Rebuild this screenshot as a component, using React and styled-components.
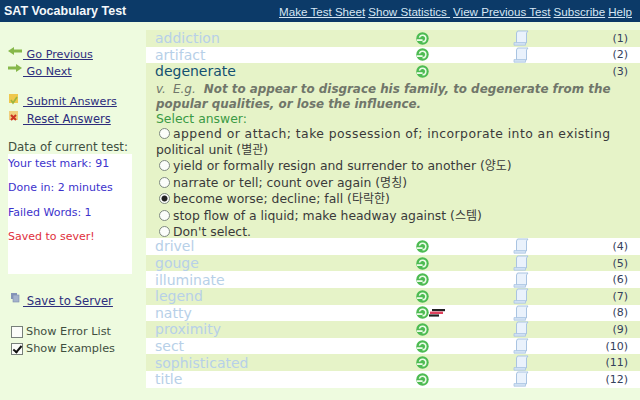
import React from "react";
import styled, { createGlobalStyle } from "styled-components";

const GlobalStyle = createGlobalStyle`
  html, body {
    margin: 0;
    padding: 0;
    background: #eefbdf;
  }
  body {
    font-family: "DejaVu Sans", Verdana, sans-serif;
    width: 640px;
    height: 400px;
    overflow: hidden;
  }
`;

const Header = styled.div`
  height: 22px;
  background: #0c3a68;
  display: flex;
  align-items: center;
  justify-content: space-between;
  padding: 0 8px 0 4px;
`;

const Title = styled.div`
  color: #f4f8fb;
  font: bold 12.5px "Liberation Sans", Arial, sans-serif;
`;

const TopNav = styled.div`
  display: flex;
  gap: 3px;
`;

const TopLink = styled.a`
  color: #d6e6f4;
  font: 11.6px "Liberation Sans", Arial, sans-serif;
  text-decoration: underline;
  white-space: pre;
`;

const Body = styled.div`
  display: flex;
`;

const Sidebar = styled.div`
  width: 146px;
  flex: none;
  padding: 24px 0 0 8px;
  box-sizing: border-box;
  font-size: 11px;
  color: #3f4f3f;
`;

const NavItem = styled.a`
  display: flex;
  align-items: flex-start;
  height: 17px;
  line-height: 18px;
  color: #2d2d7c;
  font-size: ${(p) => p.$size || 11.2}px;
  text-decoration: underline;
  white-space: pre;
  margin-top: ${(p) => p.$top || 0}px;
`;

const NavIcon = styled.svg`
  width: 15px;
  height: 12px;
  flex: none;
  margin-top: 1px;
`;

const DataLabel = styled.div`
  margin-top: 12px;
  height: 15px;
  line-height: 16px;
  font-size: 11.8px;
`;

const ResultBox = styled.div`
  width: 124px;
  height: 120px;
  background: #fff;
  box-sizing: border-box;
`;

const ResultLine = styled.div`
  height: 24.3px;
  line-height: 20px;
  color: ${(p) => p.$color};
`;

const CheckRow = styled.div`
  display: flex;
  align-items: center;
  height: 17px;
  padding-left: 3px;
  font-size: 11.3px;
  margin-top: ${(p) => p.$top || 0}px;
`;

const CheckBox = styled.input`
  appearance: none;
  width: 12px;
  height: 12px;
  margin: 0 3px 0 0;
  border: 1px solid #77807a;
  background: #fbfdf9;
  position: relative;
  &:checked::after {
    content: "";
    position: absolute;
    left: 3px;
    top: 0;
    width: 3px;
    height: 7px;
    border: solid #111;
    border-width: 0 2px 2px 0;
    transform: rotate(40deg);
  }
`;

const Main = styled.div`
  flex: 1;
  padding-top: 8px;
`;

const Row = styled.div`
  display: grid;
  grid-template-columns: 270px 97px 1fr 20px;
  align-items: center;
  height: 16.6px;
  background: ${(p) => (p.$odd ? "#e6f3c8" : "#fff")};
`;

const Word = styled.span`
  font-size: 14px;
  line-height: 16px;
  padding-left: 9px;
  color: ${(p) => (p.$active ? "#135070" : "#b7d0e8")};
`;

const IconCell = styled.span`
  display: flex;
  align-items: center;
`;

const Num = styled.span`
  font-size: 11px;
  color: #34405c;
  text-align: right;
  justify-self: end;
  white-space: nowrap;
  padding-right: 12px;
  grid-column: 4;
`;

const Expanded = styled.div`
  background: #e6f3c8;
  height: 175px;
`;

const Details = styled.div`
  padding: 0 20px 0 10px;
  color: #2c2c2c;
  font-size: 12.4px;
  line-height: 15px;
`;

const Example = styled.div`
  color: #70766a;
  font-style: italic;
  font-size: 12px;
  line-height: 15px;
  padding-top: 2px;
  & b {
    font-size: 11.9px;
    margin-left: 8px;
  }
`;

const ExampleKind = styled.span`
  margin-right: 7px;
`;

const SelectLabel = styled.div`
  color: #3a9a44;
  line-height: 14.5px;
`;

const Option = styled.label`
  display: block;
  line-height: 15.5px;
  margin-bottom: 1px;
  color: #3a3a3a;
`;

const Spread = styled.span`
  letter-spacing: 0.44px;
`;

const Radio = styled.input`
  appearance: none;
  width: 11px;
  height: 11px;
  margin: 0 3px 0 3px;
  vertical-align: -1px;
  border: 1px solid #7f8a80;
  border-radius: 50%;
  background: #fbfdfa;
  &:checked {
    background: radial-gradient(circle, #222 0 2.6px, #fbfdfa 3.4px);
  }
`;

const Cjk = styled.span`
  font-family: "Noto Sans CJK KR", sans-serif;
  font-size: 12px;
  line-height: 0;
`;

const Retry = () => (
  <svg width="13" height="13" viewBox="0 0 13 13">
    <circle cx="6.5" cy="6.5" r="6.2" fill="#4dbb52" />
    <path d="M3.4 5.6a3.3 3.3 0 1 1 3.1 4.2" fill="none" stroke="#eafbe6" strokeWidth="1.5" />
    <path d="M1 7.2h5.6V9H1z" fill="#eafbe6" />
  </svg>
);

const Scroll = () => (
  <svg width="16" height="16" viewBox="0 0 16 16">
    <path d="M4.5 1h10.5l-1.5 2v10H3.5V3z" fill="#eaf2fc" stroke="#a9c4e2" strokeWidth="1" />
    <path d="M1 12.6h11.5v2.6H1z" fill="#d3e3f5" stroke="#a9c4e2" strokeWidth="0.8" />
  </svg>
);

const Flag = () => (
  <svg width="16" height="8" viewBox="0 0 16 8">
    <path d="M3 0h13v2.2H3z" fill="#222" />
    <path d="M1 2.6h13v2.4H1z" fill="#e0405c" />
    <path d="M0 5.4h10v2.2H0z" fill="#222" />
  </svg>
);

const IconPrev = () => (
  <NavIcon viewBox="0 0 15 12">
    <path d="M0 4l6-4v2.5h8v3H6V8z" fill="#86b84a" />
  </NavIcon>
);

const IconNext = () => (
  <NavIcon viewBox="0 0 15 12">
    <path d="M14 4L8 0v2.5H0v3h8V8z" fill="#86b84a" />
  </NavIcon>
);

const IconSubmit = () => (
  <NavIcon viewBox="0 0 15 12">
    <rect x="1" y="0" width="9" height="9" fill="#efc84e" />
    <path d="M3 6l2 3 4-6" fill="none" stroke="#9cb63f" strokeWidth="1.6" />
  </NavIcon>
);

const IconReset = () => (
  <NavIcon viewBox="0 0 15 12">
    <rect x="1" y="0" width="9" height="9" fill="#f0cf7e" />
    <path d="M3 4l5 5M8 4l-5 5" stroke="#cc3322" strokeWidth="2" />
  </NavIcon>
);

const IconSave = () => (
  <NavIcon viewBox="0 0 15 12">
    <rect x="3" y="0" width="6" height="6" fill="#8494b8" />
    <rect x="5" y="2" width="6" height="7" fill="#a4b2cc" stroke="#7b8aae" strokeWidth="0.6" />
  </NavIcon>
);

const WordRow = ({ word, num, odd, active, flag, noScroll }) => (
  <Row $odd={odd}>
    <Word $active={active}>{word}</Word>
    <IconCell>
      <Retry />
      {flag && <Flag />}
    </IconCell>
    <IconCell>{!noScroll && <Scroll />}</IconCell>
    <Num>({num})</Num>
  </Row>
);

export default function App() {
  return (
    <>
      <GlobalStyle />
      <Header>
        <Title>SAT Vocabulary Test</Title>
        <TopNav>
          <TopLink>Make Test Sheet</TopLink>
          <TopLink>Show Statistics </TopLink>
          <TopLink>View Previous Test</TopLink>
          <TopLink>Subscribe</TopLink>
          <TopLink>Help</TopLink>
        </TopNav>
      </Header>
      <Body>
        <Sidebar>
          <NavItem><IconPrev />{" Go Previous"}</NavItem>
          <NavItem><IconNext />{" Go Next"}</NavItem>
          <NavItem $top={13}><IconSubmit />{" Submit Answers"}</NavItem>
          <NavItem $size={11.5}><IconReset />{" Reset Answers"}</NavItem>
          <DataLabel>Data of current test:</DataLabel>
          <ResultBox>
            <ResultLine $color="#3c32cc">Your test mark: 91</ResultLine>
            <ResultLine $color="#3c32cc">Done in: 2 minutes</ResultLine>
            <ResultLine $color="#3c32cc">Failed Words: 1</ResultLine>
            <ResultLine $color="#e0303c">Saved to sever!</ResultLine>
          </ResultBox>
          <NavItem $top={18} $size={11.7}><IconSave />{" Save to Server"}</NavItem>
          <CheckRow $top={14}><CheckBox type="checkbox" readOnly />Show Error List</CheckRow>
          <CheckRow><CheckBox type="checkbox" checked readOnly />Show Examples</CheckRow>
        </Sidebar>
        <Main>
          <WordRow word="addiction" num={1} odd />
          <WordRow word="artifact" num={2} />
          <Expanded>
            <WordRow word="degenerate" num={3} odd active noScroll />
            <Details>
              <Example>
                <ExampleKind>v.</ExampleKind>E.g.<b>Not to appear to disgrace his family, to degenerate from the popular qualities, or lose the influence.</b>
              </Example>
              <SelectLabel>Select answer:</SelectLabel>
              <Option><Radio type="radio" name="a" readOnly /><Spread>append or attach; take possession of; incorporate into an existing</Spread> political unit (<Cjk>별관</Cjk>)</Option>
              <Option><Radio type="radio" name="a" readOnly />yield or formally resign and surrender to another (<Cjk>양도</Cjk>)</Option>
              <Option><Radio type="radio" name="a" readOnly />narrate or tell; count over again (<Cjk>명칭</Cjk>)</Option>
              <Option><Radio type="radio" name="a" checked readOnly />become worse; decline; fall (<Cjk>타락한</Cjk>)</Option>
              <Option><Radio type="radio" name="a" readOnly />stop flow of a liquid; make headway against (<Cjk>스템</Cjk>)</Option>
              <Option><Radio type="radio" name="a" readOnly />Don't select.</Option>
            </Details>
          </Expanded>
          <WordRow word="drivel" num={4} />
          <WordRow word="gouge" num={5} odd />
          <WordRow word="illuminate" num={6} />
          <WordRow word="legend" num={7} odd />
          <WordRow word="natty" num={8} flag />
          <WordRow word="proximity" num={9} odd />
          <WordRow word="sect" num={10} />
          <WordRow word="sophisticated" num={11} odd />
          <WordRow word="title" num={12} />
        </Main>
      </Body>
    </>
  );
}
